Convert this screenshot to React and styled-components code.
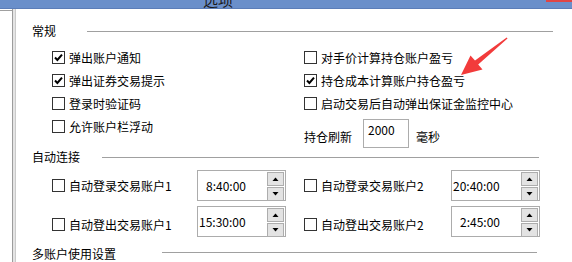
import React from 'react'
import styled, { createGlobalStyle } from 'styled-components'

const GlobalStyle = createGlobalStyle`
  html, body {
    margin: 0;
    padding: 0;
    background: #ffffff;
    overflow: hidden;
  }
  body {
    font-family: "Noto Sans CJK SC", "Noto Sans", sans-serif;
    font-size: 12px;
    color: #000;
  }
`

const Window = styled.div`
  position: relative;
  width: 572px;
  height: 262px;
  overflow: hidden;
  display: flex;
  flex-direction: column;
`

const TitleBar = styled.div`
  height: 10px;
  background: #6a8fca;
  border-bottom: 1px solid #5b7db8;
  display: flex;
  overflow: hidden;
`

const TitleText = styled.span`
  margin-left: 203px;
  margin-top: -8px;
  line-height: 16px;
  font-size: 15px;
  color: #1a1a1a;
`

const CloseButton = styled.div`
  margin-left: auto;
  width: 26px;
  height: 2px;
  background: #e04545;
`

const Body = styled.div`
  flex: 1;
  display: flex;
`

const LeftStrip = styled.div`
  width: 12px;
  margin-top: 1px;
  border-top: 1px solid #a0a0a0;
`

const Divider = styled.div`
  width: 2px;
  background: #e4e4e4;
  border-left: 1px solid #9c9c9c;
  border-right: 1px solid #cacaca;
`

const Content = styled.div`
  flex: 1;
  padding: 14px 0 0 16px;
  display: flex;
  flex-direction: column;
`

const SectionHead = styled.div`
  display: flex;
  align-items: center;
  height: 16px;
  margin-top: ${(p) => p.top || 0}px;
`

const SectionLabel = styled.span`
  line-height: 16px;
  white-space: nowrap;
`

const SectionLine = styled.div`
  height: 1px;
  background: #a0a0a0;
  margin-left: ${(p) => p.start}px;
  width: ${(p) => p.width}px;
  margin-top: ${(p) => p.shift || 0}px;
`

const General = styled.div`
  display: flex;
  margin-top: 7px;
  padding-left: 20px;
`

const Column = styled.div`
  display: flex;
  flex-direction: column;
  width: ${(p) => p.width}px;
`

const Row = styled.div`
  display: flex;
  align-items: center;
  height: 23px;
`

const Check = styled.span`
  width: 11px;
  height: 11px;
  border: 1px solid #333;
  background: #fff;
  flex-shrink: 0;
  display: flex;
  align-items: center;
  justify-content: center;
`

const Label = styled.span`
  margin-left: 4px;
  white-space: nowrap;
  line-height: 16px;
`

const RefreshRow = styled.div`
  display: flex;
  align-items: flex-start;
  margin-top: 4px;
`

const RefreshText = styled.span`
  line-height: 16px;
  margin-top: 10px;
  white-space: nowrap;
`

const NumberBox = styled.div`
  width: 40px;
  height: 25px;
  border: 1px solid #acacac;
  margin-left: 11px;
  padding: 2px 0 0 4px;
  line-height: 16px;
`

const Unit = styled.span`
  margin-left: 7px;
  margin-top: 10px;
  line-height: 16px;
`

const AutoRows = styled.div`
  display: flex;
  flex-direction: column;
  gap: 5px;
  margin-top: 5px;
  padding-left: 20px;
`

const AutoRow = styled.div`
  display: flex;
  align-items: center;
  height: 31px;
`

const Cell = styled.div`
  display: flex;
  align-items: center;
  width: ${(p) => p.width}px;
  margin-left: ${(p) => p.gap || 0}px;
  margin-top: ${(p) => p.drop || 0}px;
`

const Spinner = styled.div`
  width: 87px;
  height: 29px;
  border: 1px solid #acacac;
  display: flex;
  align-items: center;
`

const SpinValue = styled.span`
  flex: 1;
  padding-left: ${(p) => p.pad}px;
  line-height: 16px;
`

const SpinButtons = styled.div`
  display: flex;
  flex-direction: column;
  gap: 1px;
  margin-right: 1px;
  align-self: flex-start;
  margin-top: 1px;
`

const SpinButton = styled.div`
  width: 15px;
  height: 12px;
  background: #e3e3e3;
  border: 1px solid #adadad;
  display: flex;
  align-items: center;
  justify-content: center;
`

const Arrow = styled.svg`
  position: absolute;
  left: 0;
  top: 0;
  pointer-events: none;
`

const CheckMark = () => (
  <svg width="9" height="9" viewBox="0 0 9 9">
    <path d="M1 4.5 L3.4 7 L8 1.6" fill="none" stroke="#000" strokeWidth="2" />
  </svg>
)

const Box = ({ checked, children }) => (
  <Row>
    <Check>{checked && <CheckMark />}</Check>
    <Label>{children}</Label>
  </Row>
)

const Tri = ({ up }) => (
  <svg width="7" height="4" viewBox="0 0 7 4">
    <path d={up ? 'M0.5 4 L3.5 0.5 L6.5 4 Z' : 'M0.5 0 L3.5 3.5 L6.5 0 Z'} fill="#000" />
  </svg>
)

const TimeSpinner = ({ value, pad }) => (
  <Spinner>
    <SpinValue pad={pad}>{value}</SpinValue>
    <SpinButtons>
      <SpinButton><Tri up /></SpinButton>
      <SpinButton><Tri /></SpinButton>
    </SpinButtons>
  </Spinner>
)

const AutoCell = ({ label, width, gap, drop }) => (
  <Cell width={width} gap={gap} drop={drop}>
    <Check />
    <Label>{label}</Label>
  </Cell>
)

const App = () => (
  <Window>
    <GlobalStyle />
    <TitleBar>
      <TitleText>选项</TitleText>
      <CloseButton />
    </TitleBar>
    <Body>
      <LeftStrip />
      <Divider />
      <Content>
        <SectionHead>
          <SectionLabel>常规</SectionLabel>
          <SectionLine start={31} width={466} />
        </SectionHead>
        <General>
          <Column width={252}>
            <Box checked>弹出账户通知</Box>
            <Box checked>弹出证券交易提示</Box>
            <Box>登录时验证码</Box>
            <Box>允许账户栏浮动</Box>
          </Column>
          <Column width={250}>
            <Box>对手价计算持仓账户盈亏</Box>
            <Box checked>持仓成本计算账户持仓盈亏</Box>
            <Box>启动交易后自动弹出保证金监控中心</Box>
            <RefreshRow>
              <RefreshText>持仓刷新</RefreshText>
              <NumberBox>2000</NumberBox>
              <Unit>毫秒</Unit>
            </RefreshRow>
          </Column>
        </General>
        <SectionHead top={1}>
          <SectionLabel>自动连接</SectionLabel>
          <SectionLine start={22} width={437} />
        </SectionHead>
        <AutoRows>
          <AutoRow>
            <AutoCell label="自动登录交易账户1" width={145} />
            <TimeSpinner value="8:40:00" pad={8} />
            <AutoCell label="自动登录交易账户2" width={147} gap={18} />
            <TimeSpinner value="20:40:00" pad={1} />
          </AutoRow>
          <AutoRow>
            <AutoCell label="自动登出交易账户1" width={145} drop={6} />
            <TimeSpinner value="15:30:00" pad={1} />
            <AutoCell label="自动登出交易账户2" width={147} gap={18} drop={6} />
            <TimeSpinner value="2:45:00" pad={8} />
          </AutoRow>
        </AutoRows>
        <SectionHead top={9}>
          <SectionLabel>多账户使用设置</SectionLabel>
          <SectionLine start={46} width={375} shift={-4} />
        </SectionHead>
      </Content>
    </Body>
    <Arrow width="572" height="262" viewBox="0 0 572 262">
      <polygon
        points="506.7,37.6 475,60.5 470.5,55.5 461,75 482.5,69.5 478.2,64.4 507.5,38.6"
        fill="#f23b3b"
      />
    </Arrow>
  </Window>
)

export default App
